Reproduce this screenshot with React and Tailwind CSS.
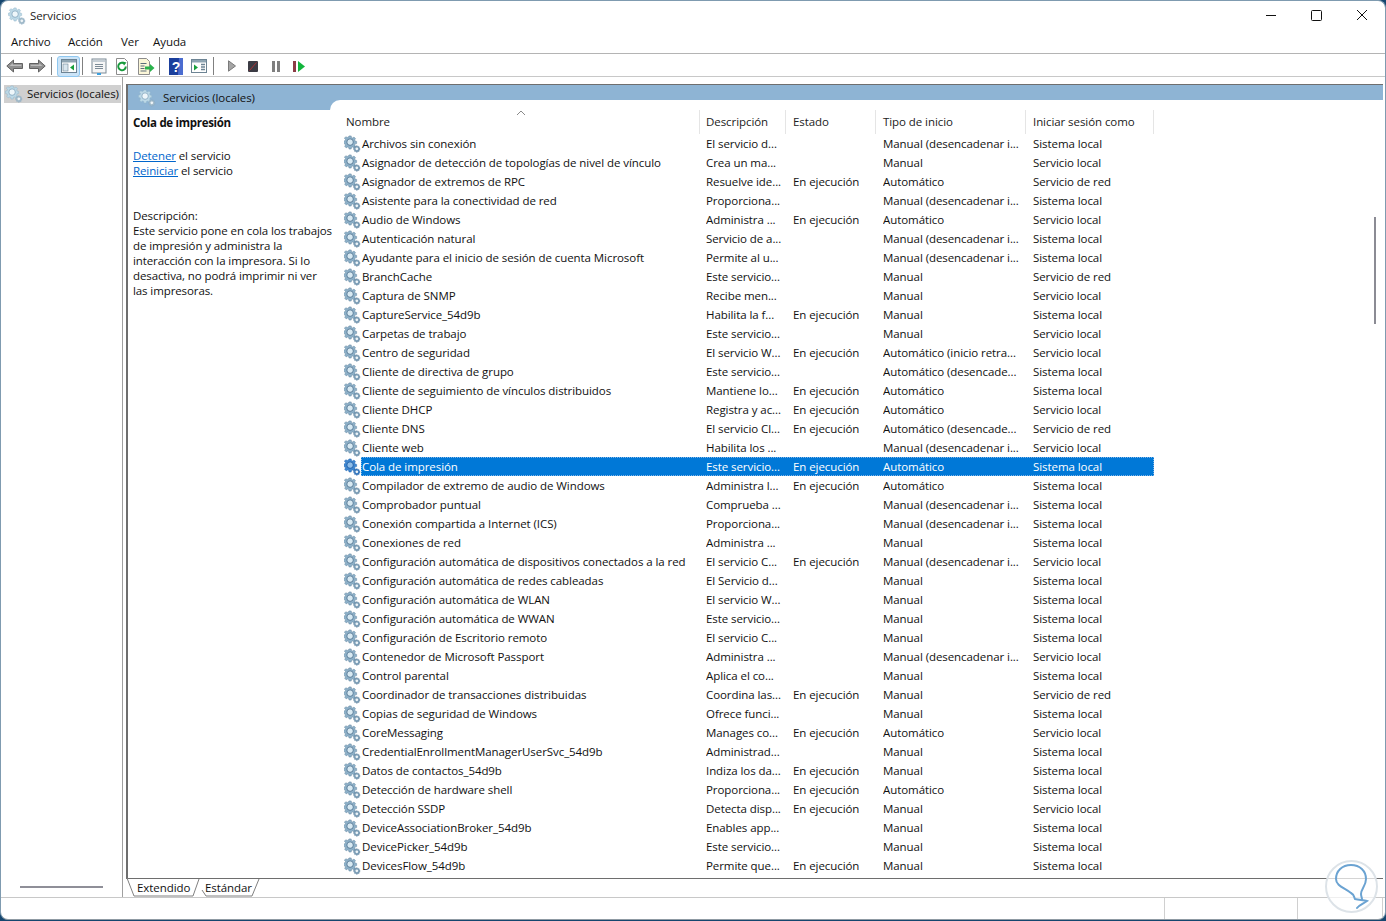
const FONT = "font-['Open_Sans',sans-serif]";

// name, description, status, startup, logon
const SERVICES = [
  ['Archivos sin conexión', 'El servicio d...', '', 'Manual (desencadenar i...', 'Sistema local'],
  ['Asignador de detección de topologías de nivel de vínculo', 'Crea un ma...', '', 'Manual', 'Servicio local'],
  ['Asignador de extremos de RPC', 'Resuelve ide...', 'En ejecución', 'Automático', 'Servicio de red'],
  ['Asistente para la conectividad de red', 'Proporciona...', '', 'Manual (desencadenar i...', 'Sistema local'],
  ['Audio de Windows', 'Administra ...', 'En ejecución', 'Automático', 'Servicio local'],
  ['Autenticación natural', 'Servicio de a...', '', 'Manual (desencadenar i...', 'Sistema local'],
  ['Ayudante para el inicio de sesión de cuenta Microsoft', 'Permite al u...', '', 'Manual (desencadenar i...', 'Sistema local'],
  ['BranchCache', 'Este servicio...', '', 'Manual', 'Servicio de red'],
  ['Captura de SNMP', 'Recibe men...', '', 'Manual', 'Servicio local'],
  ['CaptureService_54d9b', 'Habilita la f...', 'En ejecución', 'Manual', 'Sistema local'],
  ['Carpetas de trabajo', 'Este servicio...', '', 'Manual', 'Servicio local'],
  ['Centro de seguridad', 'El servicio W...', 'En ejecución', 'Automático (inicio retra...', 'Servicio local'],
  ['Cliente de directiva de grupo', 'Este servicio...', '', 'Automático (desencade...', 'Sistema local'],
  ['Cliente de seguimiento de vínculos distribuidos', 'Mantiene lo...', 'En ejecución', 'Automático', 'Sistema local'],
  ['Cliente DHCP', 'Registra y ac...', 'En ejecución', 'Automático', 'Servicio local'],
  ['Cliente DNS', 'El servicio Cl...', 'En ejecución', 'Automático (desencade...', 'Servicio de red'],
  ['Cliente web', 'Habilita los ...', '', 'Manual (desencadenar i...', 'Servicio local'],
  ['Cola de impresión', 'Este servicio...', 'En ejecución', 'Automático', 'Sistema local'],
  ['Compilador de extremo de audio de Windows', 'Administra l...', 'En ejecución', 'Automático', 'Sistema local'],
  ['Comprobador puntual', 'Comprueba ...', '', 'Manual (desencadenar i...', 'Sistema local'],
  ['Conexión compartida a Internet (ICS)', 'Proporciona...', '', 'Manual (desencadenar i...', 'Sistema local'],
  ['Conexiones de red', 'Administra ...', '', 'Manual', 'Sistema local'],
  ['Configuración automática de dispositivos conectados a la red', 'El servicio C...', 'En ejecución', 'Manual (desencadenar i...', 'Servicio local'],
  ['Configuración automática de redes cableadas', 'El Servicio d...', '', 'Manual', 'Sistema local'],
  ['Configuración automática de WLAN', 'El servicio W...', '', 'Manual', 'Sistema local'],
  ['Configuración automática de WWAN', 'Este servicio...', '', 'Manual', 'Sistema local'],
  ['Configuración de Escritorio remoto', 'El servicio C...', '', 'Manual', 'Sistema local'],
  ['Contenedor de Microsoft Passport', 'Administra ...', '', 'Manual (desencadenar i...', 'Servicio local'],
  ['Control parental', 'Aplica el co...', '', 'Manual', 'Sistema local'],
  ['Coordinador de transacciones distribuidas', 'Coordina las...', 'En ejecución', 'Manual', 'Servicio de red'],
  ['Copias de seguridad de Windows', 'Ofrece funci...', '', 'Manual', 'Sistema local'],
  ['CoreMessaging', 'Manages co...', 'En ejecución', 'Automático', 'Servicio local'],
  ['CredentialEnrollmentManagerUserSvc_54d9b', 'Administrad...', '', 'Manual', 'Sistema local'],
  ['Datos de contactos_54d9b', 'Indiza los da...', 'En ejecución', 'Manual', 'Sistema local'],
  ['Detección de hardware shell', 'Proporciona...', 'En ejecución', 'Automático', 'Sistema local'],
  ['Detección SSDP', 'Detecta disp...', 'En ejecución', 'Manual', 'Servicio local'],
  ['DeviceAssociationBroker_54d9b', 'Enables app...', '', 'Manual', 'Sistema local'],
  ['DevicePicker_54d9b', 'Este servicio...', '', 'Manual', 'Sistema local'],
  ['DevicesFlow_54d9b', 'Permite que...', 'En ejecución', 'Manual', 'Sistema local'],
];

const GEAR_PATH =
  'M6.600 0h2.800l.4 2 1.500.6 1.700-1.100 2 2-1.100 1.700.6 1.500 2 .4v2.800l-2 .4-.6 1.500 1.100 1.700-2 2-1.700-1.100-1.500.6-.4 2H6.600l-.4-2-1.500-.6-1.700 1.100-2-2 1.100-1.700-.6-1.500-2-.4V6.600l2-.4.6-1.500L.5 3l2-2 1.700 1.100 1.500-.6z';

const GEAR_COLORS = {
  normal: { big: '#8db0c8', edge: '#5f829d', ring: '#4f7390', hole: '#d8e9f2', small: '#7d9fb8' },
  pale: { big: '#bcd8e6', edge: '#8fb4ca', ring: '#86a9c0', hole: '#eef6fa', small: '#a3bbca' },
  selected: { big: '#3f86cf', edge: '#1f62ad', ring: '#1a5aa3', hole: '#8fbde8', small: '#3577bf' },
};

function GearIcon({ variant = 'normal' }) {
  const c = GEAR_COLORS[variant];
  return (
    <svg width="18" height="18" viewBox="-1 -1 20 20" className="shrink-0">
      <g transform="scale(0.86)">
        <path d={GEAR_PATH} fill={c.big} stroke={c.edge} strokeWidth="0.6" />
        <circle cx="8" cy="8" r="4.200" fill={c.hole} stroke={c.ring} strokeWidth="1.100" />
      </g>
      <g transform="translate(11 11) scale(0.42)">
        <path d={GEAR_PATH} fill={c.small} stroke={c.ring} strokeWidth="1" />
        <circle cx="8" cy="8" r="3.600" fill="#eef4f7" />
      </g>
    </svg>
  );
}

function ToolbarSeparator({ className = '' }) {
  return <div className={`w-px h-[18px] bg-[#808080] shrink-0 ${className}`} />;
}

function ArrowIcon({ flip = false, className = '' }) {
  return (
    <svg width="17" height="14" viewBox="0 0 17 14" className={`${flip ? '-scale-x-100' : ''} shrink-0 ${className}`}>
      <path d="M.8 7 7.500 1v3.500h9v5h-9V13z" fill="#8f8f8f" stroke="#626262" strokeWidth="1" />
      <path d="M3.500 7 6.800 4.300v1.500h8.500V7z" fill="#bdbdbd" />
    </svg>
  );
}

function WindowPaneIcon({ children, className = '' }) {
  return (
    <svg width="16" height="16" viewBox="0 0 16 16" className={`shrink-0 ${className}`}>
      <rect x="0.5" y="1.500" width="15" height="13" fill="#fff" stroke="#6d8494" />
      <rect x="1" y="2" width="14" height="2.500" fill="#8fa5b3" />
      {children}
    </svg>
  );
}

function Toolbar() {
  return (
    <div className="h-[23px] shrink-0 flex items-center pl-[5px] pt-[2px] border-b border-[#c8c8c8]">
      <ArrowIcon />
      <ArrowIcon flip className="ml-[6px]" />
      <ToolbarSeparator className="ml-[5px]" />
      <div className="ml-[5px] w-[23px] h-[21px] shrink-0 rounded-[3px] bg-[#cce4f7] border border-[#90c8f0] flex items-center justify-center">
        <WindowPaneIcon>
          <rect x="2" y="6" width="5" height="7" fill="#d9e6ee" stroke="#6d8494" strokeWidth="0.6" />
          <path d="M13 6.500v6l-4-3z" fill="#18a03c" />
        </WindowPaneIcon>
      </div>
      <ToolbarSeparator className="ml-[2px]" />
      <svg width="16" height="17" viewBox="0 0 16 17" className="ml-[8px] shrink-0">
        <rect x="1" y="1" width="14" height="14" fill="#f6f6f6" stroke="#7b8a96" />
        <rect x="2" y="2" width="12" height="2" fill="#c5ced5" />
        <path d="M4 6.500h8M4 8.500h8M4 10.500h8" stroke="#7b8a96" />
        <rect x="6" y="15" width="4" height="2" fill="#3aa0e0" />
      </svg>
      <svg width="16" height="17" viewBox="0 0 16 17" className="ml-[7px] shrink-0">
        <path d="M2.500.5h8l3 3v13h-11z" fill="#fff" stroke="#8c8c8c" />
        <path d="M11.800 8.500a3.800 3.800 0 1 1-1.200-2.800" fill="none" stroke="#189a3c" strokeWidth="2" />
        <path d="M8.500 3.500l4 1-2.500 3z" fill="#189a3c" />
      </svg>
      <svg width="18" height="17" viewBox="0 0 18 17" className="ml-[7px] shrink-0">
        <path d="M1.500.5h8l3 3v13h-11z" fill="#fbf6d8" stroke="#8c8c8c" />
        <path d="M3.500 5.500h6M3.500 8h4M3.500 10.500h4M3.500 13h6" stroke="#5c6d7a" />
        <path d="M8 8.500h5V6l4.500 4-4.500 4v-2.500H8z" fill="#2bb24c" />
      </svg>
      <ToolbarSeparator className="ml-[4px]" />
      <svg width="14" height="17" viewBox="0 0 14 17" className="ml-[9px] shrink-0">
        <rect width="14" height="17" fill="#1b3f9c" />
        <path d="M10 0h4v17H9z" fill="#4a6cd0" />
        <text x="7" y="13.500" textAnchor="middle" fontSize="14" fontWeight="700" fill="#fff" fontFamily="Liberation Sans, sans-serif">?</text>
      </svg>
      <WindowPaneIcon className="ml-[8px]">
        <path d="M3 6.500v6l4-3z" fill="#18a03c" />
        <path d="M10 6.500h4M10 9h4M10 11.500h4" stroke="#6d8494" strokeWidth="1.500" />
      </WindowPaneIcon>
      <ToolbarSeparator className="ml-[6px]" />
      <svg width="8" height="12" viewBox="0 0 8 12" className="ml-[14px] shrink-0">
        <path d="M.5.8v10.400L7.500 6z" fill="#a5a5a5" stroke="#7a7a7a" />
      </svg>
      <svg width="10" height="11" viewBox="0 0 10 11" className="ml-[12px] shrink-0">
        <rect width="10" height="11" rx="1" fill="#3b3b44" />
        <path d="M1.500 9.500 8.500 1.500" stroke="#a33" strokeWidth="1" />
      </svg>
      <svg width="8" height="11" viewBox="0 0 8 11" className="ml-[14px] shrink-0">
        <rect width="3" height="11" fill="#7f7f7f" />
        <rect x="5" width="3" height="11" fill="#7f7f7f" />
      </svg>
      <svg width="12" height="11" viewBox="0 0 12 11" className="ml-[13px] shrink-0">
        <rect width="3" height="11" fill="#8c3c46" />
        <path d="M5 0v11l7-5.500z" fill="#12b53c" />
      </svg>
    </div>
  );
}

function TreePane() {
  return (
    <div className="w-[122px] shrink-0 border-r border-[#a0a0a0] pl-[3px] pt-[8px] flex flex-col">
      <div className="w-[117px] h-[18px] bg-[#d0d0d0] flex items-center gap-[4px] pl-[1px] whitespace-nowrap">
        <GearIcon variant="pale" />
        <span className="text-[#111]">Servicios (locales)</span>
      </div>
      <div className="mt-auto mb-[9px] ml-[16px] w-[83px] h-[2px] bg-[#8f8f98]" />
    </div>
  );
}

function DescriptionPanel() {
  return (
    <div className="w-[202px] shrink-0 pl-[5px] pt-[5px] leading-[15px] tracking-[-0.1px] text-[#111] relative z-10 whitespace-nowrap">
      <div className="font-bold h-[15px] tracking-[-0.3px]">Cola de impresión</div>
      <div className="mt-[18px]">
        <span className="text-[#0066cc] underline">Detener</span> el servicio
      </div>
      <div>
        <span className="text-[#0066cc] underline">Reiniciar</span> el servicio
      </div>
      <div className="mt-[30px]">Descripción:</div>
      <p>
        Este servicio pone en cola los trabajos
        <br />
        de impresión y administra la
        <br />
        interacción con la impresora. Si lo
        <br />
        desactiva, no podrá imprimir ni ver
        <br />
        las impresoras.
      </p>
    </div>
  );
}

function ColumnHeader({ label, className }) {
  return (
    <div className={`${className} shrink-0 h-[24px] flex items-center border-r border-[#e5e5e5]`}>
      {label}
    </div>
  );
}

function ServiceRow({ service, selected }) {
  const [name, description, status, startup, logon] = service;
  return (
    <div className="h-[19px] flex items-center whitespace-nowrap -ml-[1px]">
      <div className="w-[18px] shrink-0 flex items-center">
        <GearIcon variant={selected ? 'selected' : 'normal'} />
      </div>
      <div
        className={`h-full flex items-center ${
          selected ? 'bg-[#0078d7] text-white outline-1 outline-dotted outline-[#7fb5e8] -outline-offset-1' : ''
        }`}
      >
        <div className="w-[345px] pl-[1px] overflow-hidden">{name}</div>
        <div className="w-[87px] overflow-hidden">{description}</div>
        <div className="w-[90px]">{status}</div>
        <div className="w-[150px] overflow-hidden">{startup}</div>
        <div className="w-[121px]">{logon}</div>
      </div>
    </div>
  );
}

function ServiceTable() {
  return (
    <div className="flex-1 min-w-0 -mt-[10px] bg-white rounded-tl-[10px] relative pl-[14px] flex flex-col">
      <div className="h-[34px] shrink-0 flex pt-[10px] text-[#222]">
        <ColumnHeader label="Nombre" className="w-[356px] pl-[2px]" />
        <ColumnHeader label="Descripción" className="w-[86px] pl-[6px]" />
        <ColumnHeader label="Estado" className="w-[90px] pl-[7px]" />
        <ColumnHeader label="Tipo de inicio" className="w-[150px] pl-[7px]" />
        <ColumnHeader label="Iniciar sesión como" className="w-[128px] pl-[7px]" />
      </div>
      <svg width="10" height="6" viewBox="0 0 10 6" className="absolute left-[186px] top-[10px]">
        <path d="M1 5l4-4 4 4" fill="none" stroke="#8a8a8a" />
      </svg>
      <div className="flex-1 min-h-0 overflow-hidden">
        {SERVICES.map((service) => (
          <ServiceRow key={service[0]} service={service} selected={service[0] === 'Cola de impresión'} />
        ))}
      </div>
      {/* thin overlay scrollbar */}
      <div className="absolute right-[7px] top-[117px] w-[2px] h-[107px] bg-[#8b8b94]" />
    </div>
  );
}

function TabBar() {
  return (
    <div className="h-[19px] shrink-0 border-t border-[#6e6e6e] flex pl-[11px] text-[#111] relative">
      <svg width="136" height="19" viewBox="0 0 136 19" className="absolute left-0 -top-px">
        <path d="M1 0 8 18H67L73 1" fill="none" stroke="#808080" />
        <path d="M133 1 126 18H80L76 12" fill="none" stroke="#808080" />
      </svg>
      <span className="relative w-[68px] shrink-0 leading-[18px]">Extendido</span>
      <span className="relative leading-[18px]">Estándar</span>
    </div>
  );
}

function StatusBar() {
  return (
    <div className="h-[22px] shrink-0 border-t border-[#c8c8c8] flex justify-end pr-[2px]">
      <div className="w-[133px] border-l border-[#d0d0d0]" />
      <div className="w-[86px] border-l border-r border-[#d0d0d0]" />
    </div>
  );
}

function Watermark() {
  return (
    <div className="absolute left-[1324px] top-[859px] w-[53px] h-[53px] rounded-full bg-white/70 border-2 border-[#dde3e8]">
      <svg width="49" height="49" viewBox="0 0 49 49">
        <path
          d="M24 3C15 3 9 9 9 17C9 24 18 26 24 31C28 33 27 36 28 37C33 38 37 38 40 39C36 42 32 43 30 46M24 3C33 3 39 9 39 17C39 24 34 27 34 32C34 34 35 36 35 37"
          fill="none"
          stroke="#6ba3d2"
          strokeWidth="2"
          strokeLinecap="round"
        />
      </svg>
    </div>
  );
}

export default function App() {
  return (
    <div className={`w-[1386px] h-[921px] bg-[#15466f] overflow-hidden text-[11.5px] tracking-[-0.07px] ${FONT}`}>
      <div className="relative w-full h-[920px] bg-white border border-[#7f9bb0] border-b-[#8f9aa3] rounded-[8px] flex flex-col text-[#111] overflow-hidden">
        <div className="h-[30px] shrink-0 flex items-center pl-[7px] gap-[4px]">
          <GearIcon variant="pale" />
          <span className="text-[#222]">Servicios</span>
          <div className="ml-auto flex items-center">
            <svg width="46" height="14" viewBox="0 0 46 14">
              <path d="M19 6.500h10" stroke="#111" />
            </svg>
            <svg width="46" height="14" viewBox="0 0 46 14">
              <rect x="18.500" y="1.500" width="10" height="10" rx="1" fill="none" stroke="#111" />
            </svg>
            <svg width="46" height="14" viewBox="0 0 46 14">
              <path d="M18 1l10 10M28 1 18 11" stroke="#111" />
            </svg>
          </div>
        </div>
        <div className="h-[23px] shrink-0 flex items-center pl-[10px] border-b border-[#b4b4b4] text-[#111]">
          <span className="w-[57px]">Archivo</span>
          <span className="w-[53px]">Acción</span>
          <span className="w-[32px]">Ver</span>
          <span>Ayuda</span>
        </div>
        <Toolbar />
        <div className="flex-1 min-h-0 flex">
          <TreePane />
          <div className="flex-1 min-w-0 flex flex-col pl-[3px] pr-[2px] pt-[7px]">
            <div className="flex-1 min-h-0 border-l-2 border-t border-[#6e6e6e] flex flex-col">
              <div className="h-[25px] shrink-0 bg-[#8eb4d4] flex items-center gap-[7px] pl-[10px] text-[#111]">
                <GearIcon variant="pale" />
                <span>Servicios (locales)</span>
              </div>
              <div className="flex-1 min-h-0 flex">
                <DescriptionPanel />
                <ServiceTable />
              </div>
            </div>
            <TabBar />
          </div>
        </div>
        <StatusBar />
        <Watermark />
      </div>
    </div>
  );
}
